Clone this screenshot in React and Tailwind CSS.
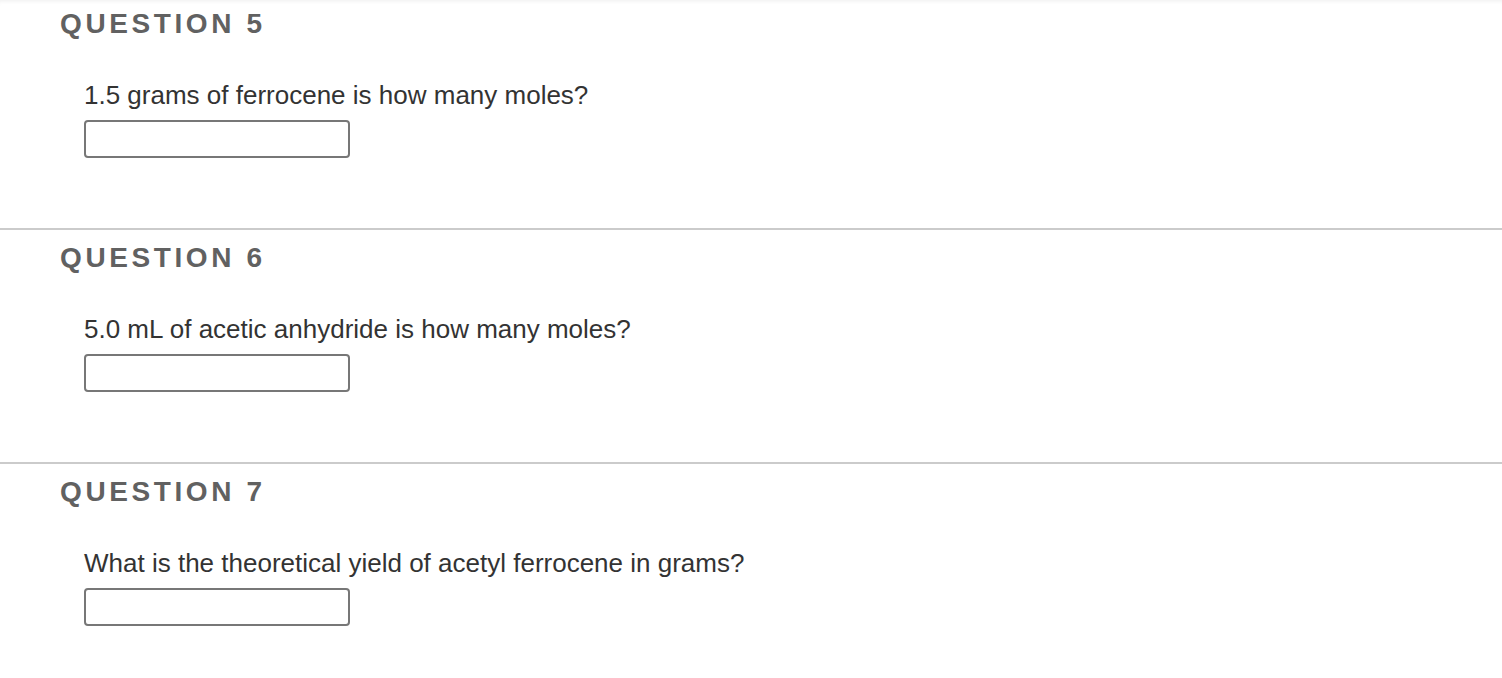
import React from "react";

const questions = [
  { n: 5, text: "1.5 grams of ferrocene is how many moles?" },
  { n: 6, text: "5.0 mL of acetic anhydride is how many moles?" },
  { n: 7, text: "What is the theoretical yield of acetyl ferrocene in grams?" },
];

export default function App() {
  return (
    <div className="min-h-[678px] w-full bg-white font-['Liberation_Sans',Arial,sans-serif] shadow-[inset_0_4px_4px_-3px_rgba(0,0,0,0.07)]">
      {questions.map((q, i) => (
        <section
          key={q.n}
          className={
            i === 0
              ? "pt-[8px] pb-[70px]"
              : i === questions.length - 1
                ? "border-t-2 border-[#cbcbcb] pt-[12px] pb-[40px]"
                : "border-t-2 border-[#cbcbcb] pt-[12px] pb-[70px]"
          }
        >
          <h2 className="pl-[60px] text-[28px] leading-[32px] font-bold tracking-[3.6px] text-[#616161]">
            QUESTION {q.n}
          </h2>
          <div className="pl-[84px]">
            <p className="mt-[40px] text-[26px] leading-[30px] text-[#333333]">{q.text}</p>
            <input
              type="text"
              className="mt-[10px] block h-[38px] w-[266px] rounded-[4px] border-2 border-[#777777] bg-white outline-none"
            />
          </div>
        </section>
      ))}
    </div>
  );
}
